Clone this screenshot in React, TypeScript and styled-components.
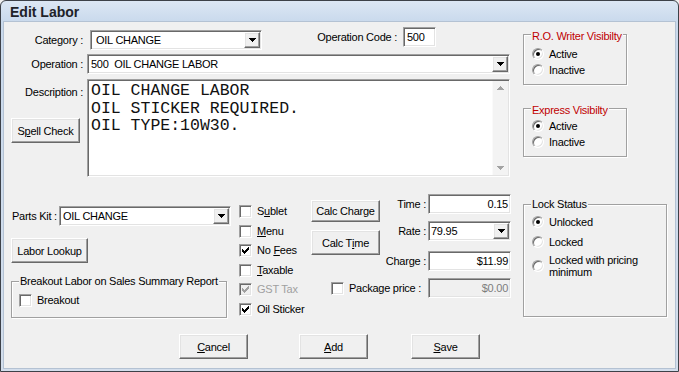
import React from "react";
import styled, { createGlobalStyle, css } from "styled-components";

const GlobalStyle = createGlobalStyle`
  html, body { margin: 0; padding: 0; background: #f0f0f0; }
  body {
    font-family: "Liberation Sans", Arial, sans-serif;
    font-size: 11px;
    letter-spacing: -0.25px;
    color: #000;
  }
  *, *::before, *::after { box-sizing: border-box; }
`;

const sunken = css`
  border: 1px solid;
  border-color: #a0a0a0 #ffffff #ffffff #a0a0a0;
  box-shadow: inset 1px 1px #696969, inset -1px -1px #e3e3e3;
`;

const raised = css`
  border: 1px solid;
  border-color: #ffffff #696969 #696969 #ffffff;
  box-shadow: inset -1px -1px #a0a0a0, inset 1px 1px #e3e3e3;
  background: #f0f0f0;
`;

const Window = styled.div`
  width: 679px;
  height: 372px;
  display: flex;
  flex-direction: column;
  border: 1px solid #3d4148;
  border-radius: 6px 6px 0 0;
  background: linear-gradient(180deg, #dce7f4 0px, #c9d9ec 21px, #d3deec 100%);
  padding: 0 3px 3px;
  overflow: hidden;
`;

const TitleBar = styled.div`
  height: 21px;
  flex: none;
  display: flex;
  align-items: center;
  padding-left: 6px;
  font-size: 14px;
  font-weight: bold;
  letter-spacing: 0;
  color: #1e2228;
`;

const Client = styled.div`
  flex: 1;
  background: #f0f0f0;
  box-shadow: 0 0 0 1px #b4c2d3;
  padding: 5px 0 0 7px;
  display: flex;
  flex-direction: column;
`;

const Body = styled.div`
  display: flex;
  align-items: flex-start;
`;

const LeftColumn = styled.div`
  width: 500px;
  display: flex;
  flex-direction: column;
`;

const RightColumn = styled.div`
  margin-left: 12px;
  width: 144px;
  display: flex;
  flex-direction: column;
  align-items: flex-start;
`;

const FormRow = styled.div<{ $mt?: number }>`
  display: flex;
  align-items: flex-start;
  margin-top: ${(p) => p.$mt ?? 0}px;
`;

const Field = styled.div<{ $mt?: number }>`
  display: flex;
  align-items: center;
  margin-top: ${(p) => p.$mt ?? 0}px;
`;

const FieldLabel = styled.div<{ $w: number; $gap: number; $align?: "left" | "right" }>`
  width: ${(p) => p.$w}px;
  margin-right: ${(p) => p.$gap}px;
  text-align: ${(p) => p.$align ?? "right"};
  white-space: nowrap;
  line-height: 13px;
`;

const Combo = styled.div<{ $w: number }>`
  ${sunken};
  width: ${(p) => p.$w}px;
  height: 20px;
  padding: 1px;
  background: #fff;
  display: flex;
  align-items: stretch;
  flex: none;
`;

const ComboValue = styled.div<{ $pad: number }>`
  flex: 1;
  display: flex;
  align-items: center;
  padding-left: ${(p) => p.$pad}px;
  white-space: pre;
  overflow: hidden;
`;

const ComboButton = styled.div`
  ${raised};
  width: 16px;
  flex: none;
  display: flex;
  align-items: center;
  justify-content: center;
`;

const TextBox = styled.div<{ $w: number; $right?: boolean; $disabled?: boolean }>`
  ${sunken};
  width: ${(p) => p.$w}px;
  height: 20px;
  flex: none;
  padding: 1px ${(p) => (p.$right ? 2 : 1)}px 1px 3px;
  background: ${(p) => (p.$disabled ? "#f0f0f0" : "#fff")};
  color: ${(p) => (p.$disabled ? "#7d7d7d" : "#000")};
  display: flex;
  align-items: center;
  justify-content: ${(p) => (p.$right ? "flex-end" : "flex-start")};
`;

const LabelStack = styled.div`
  width: 72px;
  display: flex;
  flex-direction: column;
  align-items: flex-start;
`;

const Memo = styled.div`
  ${sunken};
  margin-left: 4px;
  width: 423px;
  height: 98px;
  padding: 1px;
  background: #fff;
  display: flex;
`;

const MemoText = styled.div`
  flex: 1;
  padding: 1px 0 0 2px;
  font-family: "Courier New", "Liberation Mono", monospace;
  font-size: 16.5px;
  letter-spacing: 0;
  line-height: 17.5px;
  white-space: pre;
  color: #111;
`;

const ScrollTrack = styled.div`
  width: 16px;
  flex: none;
  background: #f3f3f3;
  border-left: 1px solid #fafafa;
  display: flex;
  flex-direction: column;
  justify-content: space-between;
  align-items: center;
  padding: 5px 0;
`;

const PushButton = styled.button<{ $w: number; $h: number; $mt?: number; $ml?: number }>`
  ${raised};
  width: ${(p) => p.$w}px;
  height: ${(p) => p.$h}px;
  margin: ${(p) => p.$mt ?? 0}px 0 0 ${(p) => p.$ml ?? 0}px;
  padding: 0;
  flex: none;
  font-family: "Liberation Sans", Arial, sans-serif;
  font-size: 11px;
  letter-spacing: -0.25px;
  color: #000;
  display: flex;
  align-items: center;
  justify-content: center;
  white-space: nowrap;
`;

const U = styled.span`
  text-decoration: underline;
  text-underline-offset: 1px;
`;

const Lower = styled.div`
  display: flex;
  align-items: flex-start;
  margin-top: 17px;
`;

const KitColumn = styled.div`
  width: 220px;
  padding-top: 12px;
  display: flex;
  flex-direction: column;
  align-items: flex-start;
`;

const CheckColumn = styled.div`
  margin-left: 8px;
  width: 72px;
  padding-top: 8px;
  display: flex;
  flex-direction: column;
`;

const CheckRow = styled.div<{ $h?: number }>`
  height: ${(p) => p.$h ?? 19.5}px;
  display: flex;
  align-items: center;
  white-space: nowrap;
`;

const CheckBox = styled.span<{ $disabled?: boolean }>`
  ${sunken};
  width: 13px;
  height: 13px;
  flex: none;
  background: ${(p) => (p.$disabled ? "#f0f0f0" : "#fff")};
  display: inline-flex;
  align-items: center;
  justify-content: center;
`;

const OptionText = styled.span<{ $disabled?: boolean; $lh?: number }>`
  margin-left: 5px;
  color: ${(p) => (p.$disabled ? "#a0a0a0" : "#000")};
  line-height: ${(p) => p.$lh ?? 13}px;
`;

const CalcBlock = styled.div`
  width: 200px;
  display: flex;
  flex-direction: column;
`;

const CalcTop = styled.div`
  display: flex;
  align-items: flex-start;
`;

const CalcButtons = styled.div`
  width: 69px;
  display: flex;
  flex-direction: column;
`;

const PriceFields = styled.div`
  width: 131px;
  display: flex;
  flex-direction: column;
`;

const PriceRow = styled.div<{ $mt?: number }>`
  display: flex;
  align-items: center;
  margin-top: ${(p) => p.$mt ?? 0}px;
`;

const PriceLabel = styled.div`
  flex: 1;
  text-align: right;
  padding-right: 2px;
  white-space: nowrap;
`;

const PackageRow = styled.div`
  display: flex;
  align-items: center;
  margin-top: 7px;
  padding-left: 20px;
`;

const PackageLabel = styled.span`
  flex: 1;
  margin-left: 5px;
  white-space: nowrap;
`;

const GroupBox = styled.div<{ $w: number; $h: number; $mt: number; $pt: number; $pl?: number }>`
  position: relative;
  flex: none;
  width: ${(p) => p.$w}px;
  height: ${(p) => p.$h}px;
  margin-top: ${(p) => p.$mt}px;
  padding: ${(p) => p.$pt}px 0 0 ${(p) => p.$pl ?? 8}px;
  border: 1px solid #a0a0a0;
  box-shadow: inset 1px 1px #fff, 1px 1px #fff;
  display: flex;
  flex-direction: column;
`;

const GroupLegend = styled.span<{ $red?: boolean }>`
  position: absolute;
  top: ${(p) => (p.$red ? -5 : -7)}px;
  left: 7px;
  padding: 0 1px;
  background: #f0f0f0;
  line-height: 13px;
  white-space: nowrap;
  color: ${(p) => (p.$red ? "#c00000" : "#000")};
`;

const RadioRow = styled.div<{ $h: number; $mt?: number }>`
  height: ${(p) => p.$h}px;
  margin-top: ${(p) => p.$mt ?? 0}px;
  display: flex;
  align-items: center;
`;

const Radio = styled.span<{ $on?: boolean }>`
  width: 12px;
  height: 12px;
  flex: none;
  border-radius: 50%;
  background: #fff;
  border: 1px solid;
  border-color: #a0a0a0 #ffffff #ffffff #a0a0a0;
  box-shadow: inset 1px 1px #696969, inset -1px -1px #e3e3e3;
  display: inline-flex;
  align-items: center;
  justify-content: center;
  &::after {
    content: "";
    width: 4px;
    height: 4px;
    border-radius: 50%;
    background: #000;
    display: ${(p) => (p.$on ? "block" : "none")};
  }
`;

const ButtonBar = styled.div`
  display: flex;
  margin-top: 15px;
  padding-left: 168px;
`;

const ArrowDown = ({ color = "#000" }: { color?: string }) => (
  <svg width="7" height="4" viewBox="0 0 7 4" shapeRendering="crispEdges">
    <path d="M0 0H7V1H6V2H5V3H4V4H3V3H2V2H1V1H0Z" fill={color} />
  </svg>
);

const ArrowUp = ({ color = "#000" }: { color?: string }) => (
  <svg width="7" height="4" viewBox="0 0 7 4" shapeRendering="crispEdges">
    <path d="M3 0H4V1H5V2H6V3H7V4H0V3H1V2H2V1H3Z" fill={color} />
  </svg>
);

const CheckMark = ({ color = "#000" }: { color?: string }) => (
  <svg width="7" height="7" viewBox="0 0 7 7" shapeRendering="crispEdges">
    <path
      d="M6 0H7V3H6V4H5V5H4V6H3V7H2V6H1V5H0V2H1V3H2V4H3V3H4V2H5V1H6Z"
      fill={color}
    />
  </svg>
);

const DropCombo = ({ w, pad, value }: { w: number; pad: number; value: string }) => (
  <Combo $w={w}>
    <ComboValue $pad={pad}>{value}</ComboValue>
    <ComboButton>
      <ArrowDown />
    </ComboButton>
  </Combo>
);

const Option = ({
  checked,
  disabled,
  children,
}: {
  checked?: boolean;
  disabled?: boolean;
  children: React.ReactNode;
}) => (
  <CheckRow>
    <CheckBox $disabled={disabled}>{checked && <CheckMark color={disabled ? "#a0a0a0" : "#000"} />}</CheckBox>
    <OptionText $disabled={disabled}>{children}</OptionText>
  </CheckRow>
);

export default function App() {
  return (
    <>
      <GlobalStyle />
      <Window>
        <TitleBar>Edit Labor</TitleBar>
        <Client>
          <Body>
            <LeftColumn>
              <FormRow>
                <Field $mt={3}>
                  <FieldLabel $w={72} $gap={7}>Category :</FieldLabel>
                  <DropCombo w={172} pad={4} value="OIL CHANGE" />
                </Field>
                <Field>
                  <FieldLabel $w={135} $gap={6}>Operation Code :</FieldLabel>
                  <TextBox $w={33}>500</TextBox>
                </Field>
              </FormRow>
              <FormRow $mt={4}>
                <Field>
                  <FieldLabel $w={72} $gap={4}>Operation :</FieldLabel>
                  <DropCombo w={423} pad={2} value="500  OIL CHANGE LABOR" />
                </Field>
              </FormRow>
              <FormRow $mt={5}>
                <LabelStack>
                  <FieldLabel $w={72} $gap={0} style={{ marginTop: 7 }}>
                    Description :
                  </FieldLabel>
                  <PushButton $w={69} $h={25} $mt={19}>
                    S<U>p</U>ell Check
                  </PushButton>
                </LabelStack>
                <Memo>
                  <MemoText>
                    {"OIL CHANGE LABOR\nOIL STICKER REQUIRED.\nOIL TYPE:10W30."}
                  </MemoText>
                  <ScrollTrack>
                    <ArrowUp color="#a3a3a3" />
                    <ArrowDown color="#a3a3a3" />
                  </ScrollTrack>
                </Memo>
              </FormRow>
              <Lower>
                <KitColumn>
                  <Field>
                    <FieldLabel $w={48} $gap={0} $align="left" style={{ paddingLeft: 1 }}>
                      Parts Kit :
                    </FieldLabel>
                    <DropCombo w={172} pad={2} value="OIL CHANGE" />
                  </Field>
                  <PushButton $w={77} $h={25} $mt={12}>
                    Labor Lookup
                  </PushButton>
                  <GroupBox $w={216} $h={37} $mt={18} $pt={10} $pl={7}>
                    <GroupLegend>Breakout Labor on Sales Summary Report</GroupLegend>
                    <CheckRow $h={16}>
                      <CheckBox />
                      <OptionText>Breakout</OptionText>
                    </CheckRow>
                  </GroupBox>
                </KitColumn>
                <CheckColumn>
                  <Option>
                    S<U>u</U>blet
                  </Option>
                  <Option>
                    <U>M</U>enu
                  </Option>
                  <Option checked>
                    No <U>F</U>ees
                  </Option>
                  <Option>
                    <U>T</U>axable
                  </Option>
                  <Option checked disabled>
                    GST Tax
                  </Option>
                  <Option checked>Oil Sticker</Option>
                </CheckColumn>
                <CalcBlock>
                  <CalcTop>
                    <CalcButtons>
                      <PushButton $w={69} $h={22} $mt={6}>
                        Calc Char<U>g</U>e
                      </PushButton>
                      <PushButton $w={69} $h={25} $mt={8}>
                        Calc T<U>i</U>me
                      </PushButton>
                    </CalcButtons>
                    <PriceFields>
                      <PriceRow>
                        <PriceLabel>Time :</PriceLabel>
                        <TextBox $w={83} $right>
                          0.15
                        </TextBox>
                      </PriceRow>
                      <PriceRow $mt={7}>
                        <PriceLabel>Rate :</PriceLabel>
                        <DropCombo w={83} pad={1} value="79.95" />
                      </PriceRow>
                      <PriceRow $mt={10}>
                        <PriceLabel>Charge :</PriceLabel>
                        <TextBox $w={83} $right>
                          $11.99
                        </TextBox>
                      </PriceRow>
                    </PriceFields>
                  </CalcTop>
                  <PackageRow>
                    <CheckBox />
                    <PackageLabel>Package price :</PackageLabel>
                    <TextBox $w={83} $right $disabled style={{ marginLeft: 2 }}>
                      $0.00
                    </TextBox>
                  </PackageRow>
                </CalcBlock>
              </Lower>
            </LeftColumn>
            <RightColumn>
              <GroupBox $w={104} $h={51} $mt={7} $pt={11}>
                <GroupLegend $red>R.O. Writer Visibilty</GroupLegend>
                <RadioRow $h={16}>
                  <Radio $on />
                  <OptionText>Active</OptionText>
                </RadioRow>
                <RadioRow $h={16}>
                  <Radio />
                  <OptionText>Inactive</OptionText>
                </RadioRow>
              </GroupBox>
              <GroupBox $w={104} $h={49} $mt={23} $pt={9}>
                <GroupLegend $red>Express Visibilty</GroupLegend>
                <RadioRow $h={16}>
                  <Radio $on />
                  <OptionText>Active</OptionText>
                </RadioRow>
                <RadioRow $h={16}>
                  <Radio />
                  <OptionText>Inactive</OptionText>
                </RadioRow>
              </GroupBox>
              <GroupBox $w={144} $h={113} $mt={47} $pt={7}>
                <GroupLegend>Lock Status</GroupLegend>
                <RadioRow $h={20}>
                  <Radio $on />
                  <OptionText>Unlocked</OptionText>
                </RadioRow>
                <RadioRow $h={20}>
                  <Radio />
                  <OptionText>Locked</OptionText>
                </RadioRow>
                <RadioRow $h={24} $mt={2}>
                  <Radio />
                  <OptionText $lh={12}>
                    Locked with pricing
                    <br />
                    minimum
                  </OptionText>
                </RadioRow>
              </GroupBox>
            </RightColumn>
          </Body>
          <ButtonBar>
            <PushButton $w={69} $h={25}>
              <U>C</U>ancel
            </PushButton>
            <PushButton $w={69} $h={25} $ml={51}>
              <U>A</U>dd
            </PushButton>
            <PushButton $w={69} $h={25} $ml={43}>
              <U>S</U>ave
            </PushButton>
          </ButtonBar>
        </Client>
      </Window>
    </>
  );
}
